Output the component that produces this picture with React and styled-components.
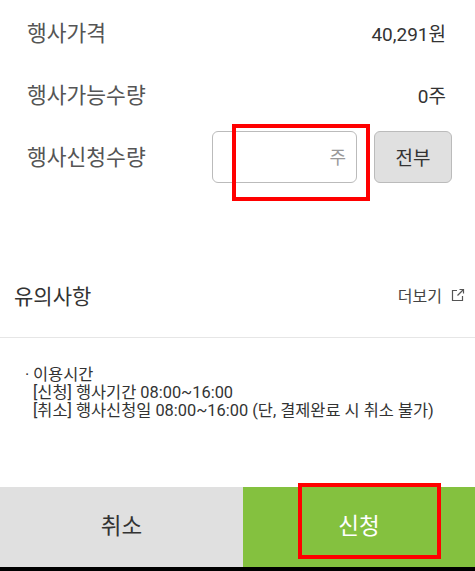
import { createGlobalStyle, styled } from "styled-components";

const GlobalStyle = createGlobalStyle`
  html, body {
    margin: 0;
    padding: 0;
    background: #fff;
  }
  body {
    font-family: Roboto, "Noto Sans CJK KR", "Noto Sans", sans-serif;
    color: #333;
  }
`;

const Page = styled.div`
  width: 475px;
  height: 571px;
  display: flex;
  flex-direction: column;
  overflow: hidden;
`;

const Info = styled.div`
  display: flex;
  flex-direction: column;
  gap: 10px;
  padding: 7px 23px 0 27px;
`;

const Row = styled.div`
  height: 52px;
  display: flex;
  align-items: center;
  justify-content: space-between;
`;

const Label = styled.span`
  font-size: 21.5px;
  color: #555;
  margin-top: -3px;
`;

const Value = styled.span`
  font-size: 19px;
  color: #333;
  margin: -2px 6px 0 0;
`;

const Controls = styled.div`
  display: flex;
  gap: 17px;
`;

const QtyField = styled.div`
  position: relative;
  width: 145px;
  height: 52px;
  box-sizing: border-box;
  border: 1px solid #bbb;
  border-radius: 6px;
  display: flex;
  align-items: center;
  justify-content: flex-end;
  padding: 0 10px 2px 0;
`;

const Unit = styled.span`
  font-size: 18px;
  color: #999;
`;

const AllButton = styled.button`
  width: 78px;
  height: 52px;
  box-sizing: border-box;
  border: 1px solid #bbb;
  border-radius: 6px;
  background: #e0e0e0;
  font-family: inherit;
  font-size: 19px;
  color: #333;
  padding: 0 0 2px;
`;

const Mark = styled.div`
  position: absolute;
  box-sizing: border-box;
  border: 4px solid #ff0000;
  pointer-events: none;
  left: ${(p) => p.$left}px;
  top: ${(p) => p.$top}px;
  width: ${(p) => p.$w}px;
  height: ${(p) => p.$h}px;
`;

const NoticeHeader = styled.div`
  margin-top: 75px;
  height: 80px;
  box-sizing: border-box;
  display: flex;
  align-items: center;
  justify-content: space-between;
  padding: 0 10px 6px 14px;
  border-bottom: 1px solid #e6e6e6;
`;

const NoticeTitle = styled.span`
  font-size: 21px;
  color: #333;
`;

const MoreLink = styled.span`
  display: flex;
  align-items: center;
  gap: 9px;
  font-size: 16px;
  color: #444;
`;

const NoticeBody = styled.div`
  padding: 28px 0 0 25px;
  font-size: 16.4px;
  line-height: 18px;
  color: #333;
`;

const NoticeLine = styled.div`
  display: flex;
  padding-left: ${(p) => (p.$indent ? 8 : 0)}px;
`;

const Bullet = styled.span`
  width: 8px;
`;

const Spacer = styled.div`
  flex: 1;
`;

const Footer = styled.div`
  display: flex;
  height: 80px;
`;

const FooterButton = styled.div`
  position: relative;
  flex: ${(p) => (p.$primary ? "0 0 232px" : "1")};
  display: flex;
  align-items: center;
  justify-content: center;
  padding-bottom: 6px;
  box-sizing: border-box;
  background: ${(p) => (p.$primary ? "#84c13f" : "#e0e0e0")};
  color: ${(p) => (p.$primary ? "#fff" : "#333")};
  font-size: 22.5px;
`;

const NavStrip = styled.div`
  height: 4px;
  background: #000;
`;

const ExternalIcon = () => (
  <svg width="14" height="14" viewBox="0 0 14 14" fill="none" stroke="#555" strokeWidth="1.2">
    <path d="M6 2.5H1.5v10h10V8" />
    <path d="M8.5 1.5h4v4" />
    <path d="M12.5 1.5 6.5 7.5" />
  </svg>
);

export default function App() {
  return (
    <>
      <GlobalStyle />
      <Page>
        <Info>
          <Row>
            <Label>행사가격</Label>
            <Value>40,291원</Value>
          </Row>
          <Row>
            <Label>행사가능수량</Label>
            <Value>0주</Value>
          </Row>
          <Row>
            <Label>행사신청수량</Label>
            <Controls>
              <QtyField>
                <Unit>주</Unit>
                <Mark $left={19} $top={-8} $w={138} $h={77} />
              </QtyField>
              <AllButton>전부</AllButton>
            </Controls>
          </Row>
        </Info>

        <NoticeHeader>
          <NoticeTitle>유의사항</NoticeTitle>
          <MoreLink>
            더보기
            <ExternalIcon />
          </MoreLink>
        </NoticeHeader>
        <NoticeBody>
          <NoticeLine>
            <Bullet>·</Bullet>이용시간
          </NoticeLine>
          <NoticeLine $indent>[신청] 행사기간 08:00~16:00</NoticeLine>
          <NoticeLine $indent>[취소] 행사신청일 08:00~16:00 (단, 결제완료 시 취소 불가)</NoticeLine>
        </NoticeBody>

        <Spacer />
        <Footer>
          <FooterButton>취소</FooterButton>
          <FooterButton $primary>
            신청
            <Mark $left={55} $top={-4} $w={143} $h={76} />
          </FooterButton>
        </Footer>
        <NavStrip />
      </Page>
    </>
  );
}
